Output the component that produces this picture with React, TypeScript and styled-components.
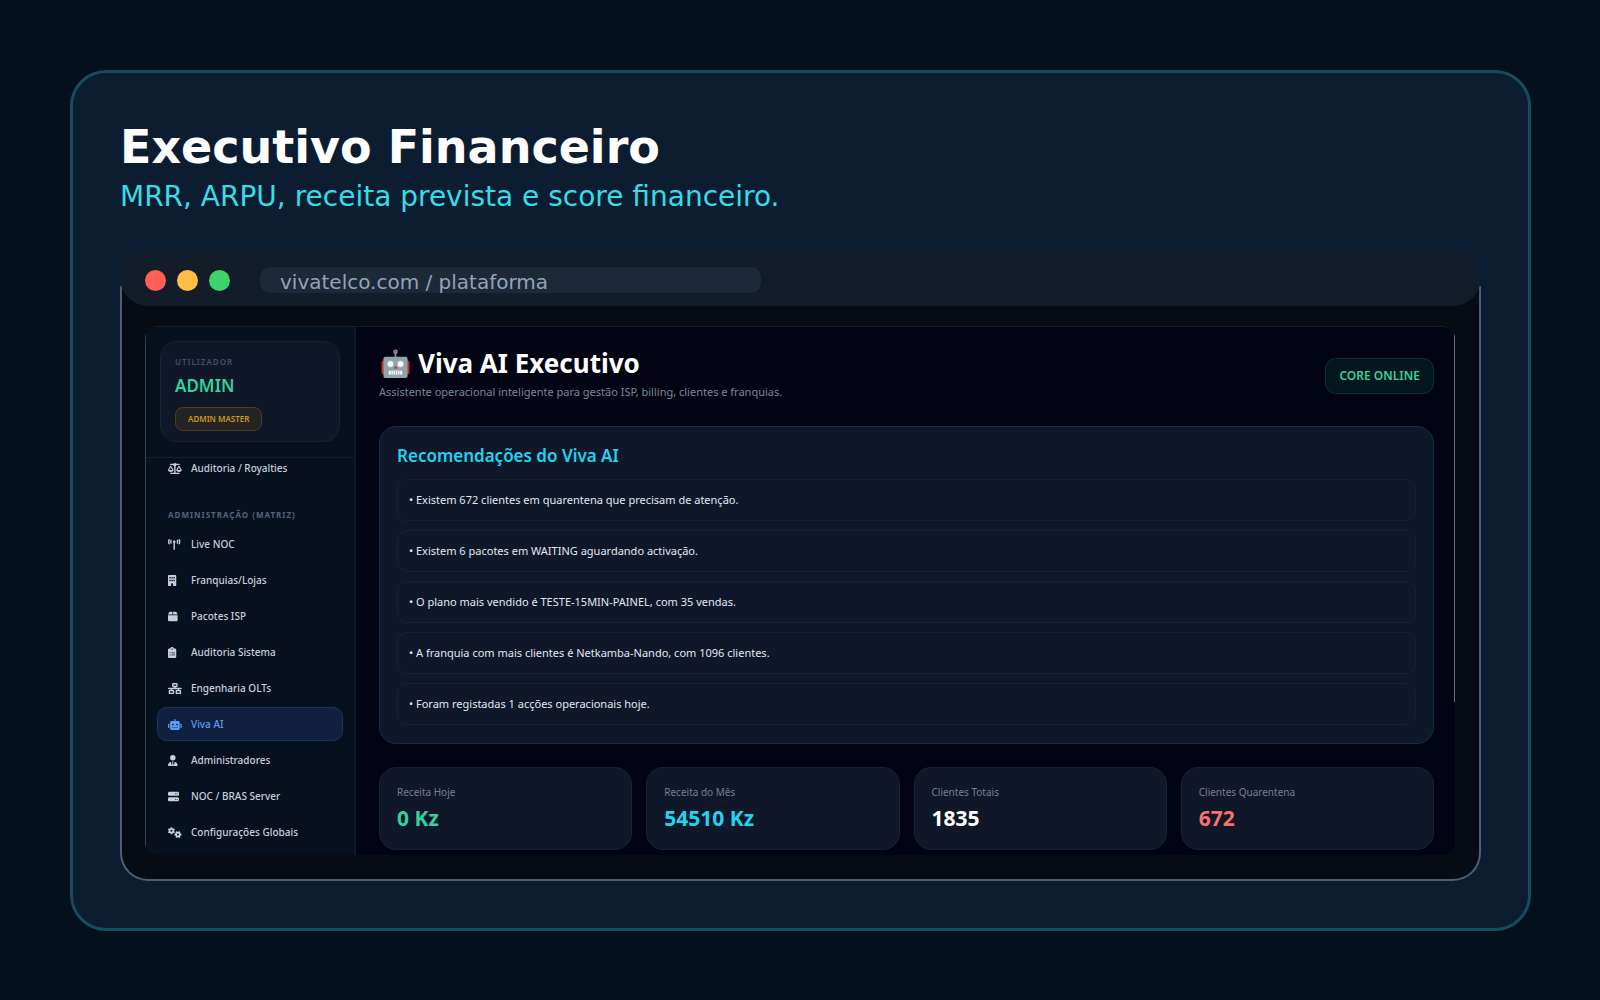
import React from "react";
import styled, { createGlobalStyle } from "styled-components";
import {
  FaScaleBalanced,
  FaTowerBroadcast,
  FaBuilding,
  FaBox,
  FaClipboardList,
  FaNetworkWired,
  FaRobot,
  FaUserTie,
  FaServer,
  FaGears,
} from "react-icons/fa6";

const GlobalStyle = createGlobalStyle`
  *, *::before, *::after { box-sizing: border-box; }
  body { margin: 0; background: #04101c; }
  h1, h2, p, ul, dl, dd { margin: 0; padding: 0; }
  ul { list-style: none; }
`;

const display = `"DejaVu Sans", sans-serif`;
const ui = `"Noto Sans", "Open Sans", sans-serif`;

const Page = styled.div`
  min-height: 100vh;
  padding: 70px 69px 69px 70px;
  display: flex;
  background: #04101c;
`;

const Slide = styled.section`
  flex: 1;
  min-width: 0;
  display: flex;
  flex-direction: column;
  padding: 46px 47px 47px;
  border: 3px solid #164c5c;
  border-radius: 36px;
  background: #0c1c31;
`;

const SlideTitle = styled.h1`
  font: 700 46px/56px ${display};
  color: #ffffff;
`;

const SlideSubtitle = styled.p`
  margin-top: 4px;
  font: 400 28px/36px ${display};
  color: #37dce4;
`;

const BrowserFrame = styled.div`
  flex: 1;
  margin-top: 35px;
  display: flex;
  flex-direction: column;
  border-radius: 28px;
  background: linear-gradient(#0c1c31 36px, #4f5d75 36px);
`;

const BrowserBar = styled.div`
  position: relative;
  z-index: 1;
  height: 56px;
  display: flex;
  align-items: center;
  gap: 11px;
  padding: 4px 25px 0;
  border-radius: 28px;
  background: #131c29;
`;

const Light = styled.span<{ $color: string }>`
  width: 21px;
  height: 21px;
  border-radius: 50%;
  background: ${(p) => p.$color};
`;

const Address = styled.input`
  width: 501px;
  height: 26px;
  margin-left: 19px;
  padding: 3px 20px 0;
  border: 0;
  border-radius: 10px;
  background: #1d2838;
  color: #94a3b8;
  font: 400 20px/23px ${display};
  outline: none;
`;

const BrowserBody = styled.div`
  flex: 1;
  display: flex;
  margin: -20px 2px 2px;
  padding: 40px 24px 24px 23px;
  border-radius: 0 0 26px 26px;
  background: #070b14;
`;

const AppShell = styled.div`
  flex: 1;
  min-width: 0;
  display: grid;
  grid-template-columns: 211px minmax(0, 1fr);
  border-top: 1px solid #151c2a;
  border-radius: 12px;
  overflow: hidden;
  background: #020414;
  position: relative;
`;

const EdgeLine = styled.span<{ $side: "left" | "right" }>`
  position: absolute;
  top: 5px;
  width: 1px;
  ${(p) =>
    p.$side === "left"
      ? "left: 0; bottom: 6px; background: #3a3f47;"
      : "right: 0; height: 70%; background: #6b6b73;"}
`;

const Sidebar = styled.aside`
  border-right: 2px solid #0f1828;
  background: #07101d;
  font-family: ${ui};
`;

const SidebarHeader = styled.div`
  padding: 14px 14px 15px 15px;
  border-bottom: 1px solid #141d2b;
`;

const UserCard = styled.div`
  display: flex;
  flex-direction: column;
  align-items: flex-start;
  height: 101px;
  padding: 14px;
  border: 1px solid #182233;
  border-radius: 16px;
  background: #0f1729;
`;

const UserCaption = styled.span`
  font-size: 8px;
  font-weight: 600;
  line-height: 12px;
  letter-spacing: 1px;
  color: #435066;
`;

const UserName = styled.strong`
  margin-top: 6px;
  font-size: 17px;
  font-weight: 600;
  line-height: 24px;
  color: #34d399;
`;

const RoleBadge = styled.span`
  margin-top: 9px;
  padding: 0 12px;
  border: 1px solid #553c18;
  border-radius: 8px;
  background: #252425;
  color: #c99a1c;
  font-size: 8px;
  font-weight: 600;
  line-height: 22px;
`;

const NavList = styled.ul`
  display: flex;
  flex-direction: column;
  gap: 2px;
  padding: 0 11px 0 12px;
`;

const FirstGroup = styled(NavList)`
  margin-top: -7px;
`;

const GroupTitle = styled.h2`
  margin: 23px 0 5px 23px;
  font-size: 8px;
  font-weight: 700;
  line-height: 14px;
  letter-spacing: 1px;
  color: #56647a;
`;

const NavLink = styled.a<{ $active?: boolean }>`
  display: grid;
  grid-template-columns: 14px 1fr;
  align-items: center;
  column-gap: 9px;
  height: 34px;
  padding: 0 10px;
  border: 1px solid ${(p) => (p.$active ? "#1b3462" : "transparent")};
  border-radius: 10px;
  background: ${(p) => (p.$active ? "#10203f" : "transparent")};
  color: ${(p) => (p.$active ? "#5b9df5" : "#c6cfdb")};
  font-size: 10px;
  font-weight: 500;
  line-height: 16px;
  text-decoration: none;

  svg {
    width: 14px;
    height: 11px;
  }
`;

const Main = styled.main`
  display: flex;
  flex-direction: column;
  min-width: 0;
  padding: 18px 21px 4px 23px;
  font-family: ${ui};
`;

const MainHeader = styled.header`
  display: flex;
  justify-content: space-between;
  align-items: center;
  height: 62px;
  margin-bottom: 19px;
`;

const MainTitle = styled.h1`
  display: flex;
  align-items: center;
  gap: 8px;
  padding-left: 2px;
  font-size: 26px;
  font-weight: 700;
  line-height: 36px;
  color: #ffffff;
`;

const MainSubtitle = styled.p`
  margin-bottom: 4px;
  font-size: 11px;
  line-height: 22px;
  color: #7c8799;
`;

const StatusBadge = styled.span`
  padding: 0 13px;
  border: 1px solid #07372f;
  border-radius: 11px;
  background: #03151f;
  color: #34d399;
  font-size: 12px;
  font-weight: 600;
  line-height: 34px;
`;

const Panel = styled.section`
  padding: 16px 17px 18px;
  border: 1px solid #0c3248;
  border-radius: 17px;
  background: #0f1729;
`;

const PanelTitle = styled.h2`
  margin-bottom: 10px;
  font-size: 17px;
  font-weight: 600;
  line-height: 26px;
  color: #22d3ee;
`;

const TipList = styled.ul`
  display: flex;
  flex-direction: column;
  gap: 9px;
`;

const Tip = styled.li`
  padding: 0 11px;
  border: 1px solid #172132;
  border-radius: 10px;
  font-size: 11px;
  line-height: 40px;
  color: #e2e8f0;
`;

const Stats = styled.dl`
  display: grid;
  grid-template-columns: repeat(4, minmax(0, 1fr));
  gap: 14px;
  margin-top: 23px;
`;

const Stat = styled.div`
  height: 83px;
  padding: 16px 17px;
  border: 1px solid #182233;
  border-radius: 17px;
  background: #0f1729;
`;

const StatLabel = styled.dt`
  font-size: 10px;
  line-height: 16px;
  color: #728094;
`;

const StatValue = styled.dd<{ $color: string }>`
  margin-top: 4px;
  font-size: 21px;
  font-weight: 700;
  line-height: 28px;
  color: ${(p) => p.$color};
`;

function RobotFace() {
  return (
    <svg width="29" height="29" viewBox="1 0 29 30" aria-hidden="true">
      <rect x="1" y="12" width="29" height="14" rx="2" fill="#c62828" />
      <rect x="14.6" y="3" width="1.8" height="6" fill="#78909c" />
      <circle cx="15.5" cy="2.8" r="2.3" fill="#90a4ae" />
      <circle cx="15.5" cy="2.8" r="1.2" fill="#d32f2f" />
      <rect x="3" y="8" width="25" height="22" rx="2" fill="#90a4ae" />
      <circle cx="10.3" cy="15.5" r="3.6" fill="#b0bec5" />
      <circle cx="20.7" cy="15.5" r="3.6" fill="#b0bec5" />
      <circle cx="10.3" cy="15.5" r="2.8" fill="#ffffff" />
      <circle cx="20.7" cy="15.5" r="2.8" fill="#ffffff" />
      <path d="M15.5 17.2l1.9 3h-3.8z" fill="#c62828" />
      <rect x="8.5" y="22.5" width="14" height="4" rx="1" fill="#ffffff" />
      <path d="M11 22.5v4M13.2 22.5v4M15.5 22.5v4M17.8 22.5v4M20 22.5v4" stroke="#90a4ae" strokeWidth="0.8" />
    </svg>
  );
}

const navItems = [
  { icon: FaTowerBroadcast, label: "Live NOC" },
  { icon: FaBuilding, label: "Franquias/Lojas" },
  { icon: FaBox, label: "Pacotes ISP" },
  { icon: FaClipboardList, label: "Auditoria Sistema" },
  { icon: FaNetworkWired, label: "Engenharia OLTs" },
  { icon: FaRobot, label: "Viva AI", active: true },
  { icon: FaUserTie, label: "Administradores" },
  { icon: FaServer, label: "NOC / BRAS Server" },
  { icon: FaGears, label: "Configurações Globais" },
];

const tips = [
  "Existem 672 clientes em quarentena que precisam de atenção.",
  "Existem 6 pacotes em WAITING aguardando activação.",
  "O plano mais vendido é TESTE-15MIN-PAINEL, com 35 vendas.",
  "A franquia com mais clientes é Netkamba-Nando, com 1096 clientes.",
  "Foram registadas 1 acções operacionais hoje.",
];

const stats = [
  { label: "Receita Hoje", value: "0 Kz", color: "#34d399" },
  { label: "Receita do Mês", value: "54510 Kz", color: "#22d3ee" },
  { label: "Clientes Totais", value: "1835", color: "#ffffff" },
  { label: "Clientes Quarentena", value: "672", color: "#f87171" },
];

export default function App() {
  return (
    <Page>
      <GlobalStyle />
      <Slide>
        <SlideTitle>Executivo Financeiro</SlideTitle>
        <SlideSubtitle>MRR, ARPU, receita prevista e score financeiro.</SlideSubtitle>
        <BrowserFrame>
          <BrowserBar>
            <Light $color="#ff5f57" />
            <Light $color="#ffbd45" />
            <Light $color="#3dd36b" />
            <Address aria-label="Endereço" defaultValue="vivatelco.com / plataforma" />
          </BrowserBar>
          <BrowserBody>
            <AppShell>
              <Sidebar>
                <SidebarHeader>
                  <UserCard>
                    <UserCaption>UTILIZADOR</UserCaption>
                    <UserName>ADMIN</UserName>
                    <RoleBadge>ADMIN MASTER</RoleBadge>
                  </UserCard>
                </SidebarHeader>
                <nav>
                  <FirstGroup>
                    <li>
                      <NavLink href="#royalties">
                        <FaScaleBalanced preserveAspectRatio="xMinYMid meet" />
                        Auditoria / Royalties
                      </NavLink>
                    </li>
                  </FirstGroup>
                  <GroupTitle>ADMINISTRAÇÃO (MATRIZ)</GroupTitle>
                  <NavList>
                    {navItems.map(({ icon: Icon, label, active }) => (
                      <li key={label}>
                        <NavLink href="#painel" $active={active} aria-current={active ? "page" : undefined}>
                          <Icon preserveAspectRatio="xMinYMid meet" />
                          {label}
                        </NavLink>
                      </li>
                    ))}
                  </NavList>
                </nav>
              </Sidebar>
              <Main>
                <MainHeader>
                  <div>
                    <MainTitle>
                      <RobotFace />
                      Viva AI Executivo
                    </MainTitle>
                    <MainSubtitle>
                      Assistente operacional inteligente para gestão ISP, billing, clientes e franquias.
                    </MainSubtitle>
                  </div>
                  <StatusBadge>CORE ONLINE</StatusBadge>
                </MainHeader>
                <Panel>
                  <PanelTitle>Recomendações do Viva AI</PanelTitle>
                  <TipList>
                    {tips.map((tip) => (
                      <Tip key={tip}>• {tip}</Tip>
                    ))}
                  </TipList>
                </Panel>
                <Stats>
                  {stats.map((s) => (
                    <Stat key={s.label}>
                      <StatLabel>{s.label}</StatLabel>
                      <StatValue $color={s.color}>{s.value}</StatValue>
                    </Stat>
                  ))}
                </Stats>
              </Main>
              <EdgeLine $side="left" />
              <EdgeLine $side="right" />
            </AppShell>
          </BrowserBody>
        </BrowserFrame>
      </Slide>
    </Page>
  );
}
